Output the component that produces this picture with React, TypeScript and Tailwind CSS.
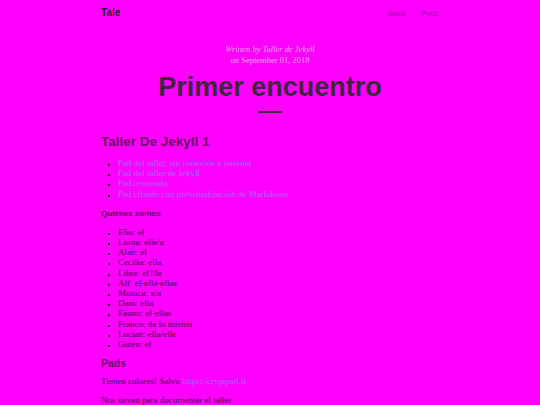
import React from 'react';

const pads = [
  'Pad del taller, sin conexión a internet',
  'Pad del taller de Jekyll',
  'Pad rescatado',
  'Pad cifrado con previsualización de Markdown',
];

const people = [
  'Elio: el',
  'Lorna: elle/a',
  'Alan: el',
  'Cecilia: ella',
  'Libre: el?/le',
  'Alf: el-ella-ellas',
  'Monica: x/a',
  'Dani: ella',
  'Fauno: el-ellas',
  'Franco: da lo mismo',
  'Lucian: ella/elle',
  'Guten: el',
];

export default function App() {
  return (
    <div className="min-h-[405px] bg-[#ff00ff] overflow-hidden">
      <div className="w-[338px] mx-auto">
        {/* Nav */}
        <nav className="h-[25px] flex items-center justify-between font-['Liberation_Sans',Arial,sans-serif]">
          <span className="text-[10px] font-bold text-[#300c30] leading-none">Tale</span>
          <div className="flex gap-4 text-[7px] text-[#a414a4] leading-none pt-[2px]">
            <span>About</span>
            <span>Posts</span>
          </div>
        </nav>

        {/* Post header */}
        <header className="mt-[19px] flex flex-col items-center text-center">
          <div className="font-['Liberation_Serif',serif] text-[8.5px] text-[#eaa6ea] leading-[11px]">
            <div className="italic">Written by Taller de Jekyll</div>
            <div>on September 01, 2018</div>
          </div>
          <h1 className="mt-[5px] font-['Liberation_Sans',Arial,sans-serif] font-bold text-[27px] leading-[32px] text-[#3b283b]">
            Primer encuentro
          </h1>
          <div className="mt-[8px] w-[24px] h-[2px] bg-[#3b283b]" />
        </header>

        {/* Content */}
        <article className="mt-[20px] font-['Liberation_Serif',serif] text-[9px] leading-[10.2px] text-[#3a0c3a]">
          <h2 className="font-['Liberation_Sans',Arial,sans-serif] font-bold text-[13.5px] leading-[18px] text-[#6a0e6a]">
            Taller De Jekyll 1
          </h2>
          <ul className="mt-[7px] pl-[17px] list-[square] marker:text-[6px] marker:text-[#3a0c3a]">
            {pads.map((p) => (
              <li key={p} className="text-[#9b6bff]">{p}</li>
            ))}
          </ul>
          <h3 className="mt-[10px] font-['Liberation_Sans',Arial,sans-serif] font-bold text-[8px] leading-[10px] text-[#5a0c5a]">
            Quiénes somos
          </h3>
          <ul className="mt-[8px] pl-[17px] list-[square] marker:text-[6px]">
            {people.map((p) => (
              <li key={p}>{p}</li>
            ))}
          </ul>
          <h3 className="mt-[7px] font-['Liberation_Sans',Arial,sans-serif] font-bold text-[10.5px] leading-[14px] text-[#6a0e6a]">
            Pads
          </h3>
          <p className="mt-[6px]">
            Tienen colores! Salvo <span className="text-[#9b6bff]">https://cryptpad.fr</span>
          </p>
          <p className="mt-[9px]">Nos sirven para documentar el taller</p>
        </article>
      </div>
    </div>
  );
}
